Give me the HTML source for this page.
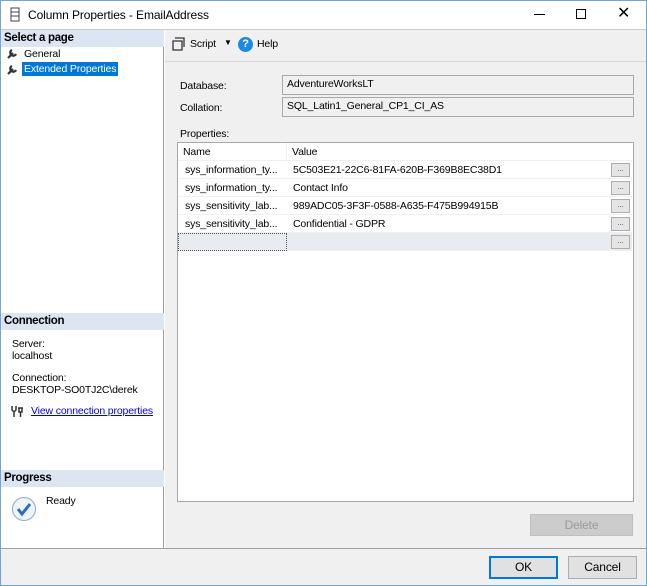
<!DOCTYPE html>
<html><head><style>
*{box-sizing:border-box;margin:0;padding:0}
body{width:647px;height:586px;overflow:hidden;font-family:"Liberation Sans",sans-serif;font-size:10.5px;letter-spacing:-0.15px;color:#000;background:#fff;position:relative}
.a{position:absolute}
.win{left:0;top:0;width:647px;height:586px;border:1px solid #6fa6d8}
.hdr{background:#dbe6f2;font-weight:bold;font-size:11.5px;padding:2px 3px;height:17px;letter-spacing:-0.3px}
.field{background:#f0f0f0;border:1px solid #a8a8a8;height:20px;padding:2px 4px}
.btn{border:1px solid #adadad;background:#e1e1e1;text-align:center;font-size:12px}
.row{position:absolute;left:0;width:454px;height:18px;border-bottom:1px solid #f0f0f0}
.row span{position:absolute;top:3px}
.dots{position:absolute;left:433px;top:2px;width:19px;height:14px;border:1px solid #adadad;background:#e5e5e5;font-size:8px;text-align:center;line-height:10px;color:#555}
</style></head><body>
<div class="a win"></div>
<div class="a" style="left:1px;top:1px;width:645px;height:28px;background:#fff"></div>
<svg class="a" style="left:10px;top:7px" width="10" height="15"><rect x="1" y="1" width="8" height="13" fill="none" stroke="#444"/><line x1="1" y1="5" x2="9" y2="5" stroke="#444"/><line x1="1" y1="9" x2="9" y2="9" stroke="#444"/></svg>
<div class="a" style="left:28px;top:8px;font-size:12px;letter-spacing:-0.1px">Column Properties - EmailAddress</div>
<div class="a" style="left:534px;top:14px;width:11px;height:1px;background:#000"></div>
<div class="a" style="left:576px;top:9px;width:10px;height:10px;border:1px solid #000"></div>
<div class="a" style="left:617px;top:3px;font-size:16px">✕</div>
<div class="a" style="left:1px;top:29px;width:645px;height:1px;background:#ccc"></div>
<div class="a" style="left:1px;top:30px;width:163px;height:518px;background:#fff;border-right:1px solid #a0a0a0"></div>
<div class="a hdr" style="left:1px;top:30px;width:163px">Select a page</div>
<svg class="a" style="left:7px;top:47px" width="12" height="12"><path d="M1 11 L6 6 M5 3 A3 3 0 1 0 9 7" stroke="#333" stroke-width="2.2" fill="none"/></svg>
<div class="a" style="left:24px;top:48px">General</div>
<svg class="a" style="left:7px;top:63px" width="12" height="12"><path d="M1 11 L6 6 M5 3 A3 3 0 1 0 9 7" stroke="#333" stroke-width="2.2" fill="none"/></svg>
<div class="a" style="left:22px;top:62px;background:#0078d7;color:#fff;padding:1px 2px">Extended Properties</div>
<div class="a hdr" style="left:1px;top:313px;width:163px">Connection</div>
<div class="a" style="left:12px;top:338px">Server:<br>localhost</div>
<div class="a" style="left:12px;top:372px">Connection:<br>DESKTOP-SO0TJ2C\derek</div>
<svg class="a" style="left:10px;top:405px" width="14" height="12"><path d="M2 1v4l2 2v5M6 1v4l-2 2M8 3h5M9 3v4h3V3M10.5 7v5" stroke="#333" stroke-width="1.5" fill="none"/></svg>
<div class="a" style="left:31px;top:405px;color:#0000ee;text-decoration:underline">View connection properties</div>
<div class="a hdr" style="left:1px;top:470px;width:163px">Progress</div>
<svg class="a" style="left:11px;top:496px" width="26" height="26"><circle cx="13" cy="13" r="11.5" fill="#eef4fb" stroke="#8aa9c9"/><path d="M7 13 L11 18 L19 8" fill="none" stroke="#2a6cc4" stroke-width="3"/></svg>
<div class="a" style="left:46px;top:495px">Ready</div>
<div class="a" style="left:165px;top:30px;width:481px;height:518px;background:#f0f0f0"></div>
<div class="a" style="left:165px;top:61px;width:481px;height:1px;background:#d8d8d8"></div>
<svg class="a" style="left:172px;top:37px" width="14" height="14"><path d="M3 1h9v9M1 4h9v9H1z" fill="none" stroke="#333" stroke-width="1.3"/></svg>
<div class="a" style="left:190px;top:38px">Script</div>
<div class="a" style="left:224px;top:38px;font-size:8px">▼</div>
<div class="a" style="left:238px;top:37px;width:15px;height:15px;border-radius:50%;background:#1e88e5;color:#fff;font-weight:bold;font-size:11px;text-align:center;line-height:15px">?</div>
<div class="a" style="left:257px;top:38px">Help</div>
<div class="a" style="left:180px;top:80px">Database:</div>
<div class="a field" style="left:282px;top:75px;width:352px">AdventureWorksLT</div>
<div class="a" style="left:180px;top:102px">Collation:</div>
<div class="a field" style="left:282px;top:97px;width:352px">SQL_Latin1_General_CP1_CI_AS</div>
<div class="a" style="left:180px;top:128px">Properties:</div>
<div class="a" style="left:177px;top:142px;width:457px;height:360px;background:#fff;border:1px solid #a8a8a8">
 <div class="row" style="top:0;height:18px"><span style="left:5px">Name</span><span style="left:114px">Value</span></div>
 <div class="a" style="left:108px;top:0;width:1px;height:18px;background:#eee"></div>
 <div class="row" style="top:18px"><span style="left:7px">sys_information_ty...</span><span style="left:115px">5C503E21-22C6-81FA-620B-F369B8EC38D1</span><div class="dots">...</div></div>
 <div class="row" style="top:36px"><span style="left:7px">sys_information_ty...</span><span style="left:115px">Contact Info</span><div class="dots">...</div></div>
 <div class="row" style="top:54px"><span style="left:7px">sys_sensitivity_lab...</span><span style="left:115px">989ADC05-3F3F-0588-A635-F475B994915B</span><div class="dots">...</div></div>
 <div class="row" style="top:72px"><span style="left:7px">sys_sensitivity_lab...</span><span style="left:115px">Confidential - GDPR</span><div class="dots">...</div></div>
 <div class="row" style="top:90px;background:#e8ebf0"><div class="a" style="left:0;top:0;width:109px;height:18px;border:1px dotted #555"></div><div class="dots">...</div></div>
</div>
<div class="a btn" style="left:530px;top:514px;width:103px;height:22px;background:#ccc;border-color:#bfbfbf;color:#9a9a9a;line-height:20px">Delete</div>
<div class="a" style="left:1px;top:548px;width:645px;height:37px;background:#f0f0f0;border-top:1px solid #a0a0a0"></div>
<div class="a btn" style="left:489px;top:556px;width:69px;height:23px;border:2px solid #0078d7;line-height:19px">OK</div>
<div class="a btn" style="left:568px;top:556px;width:69px;height:23px;line-height:21px">Cancel</div>
</body></html>
